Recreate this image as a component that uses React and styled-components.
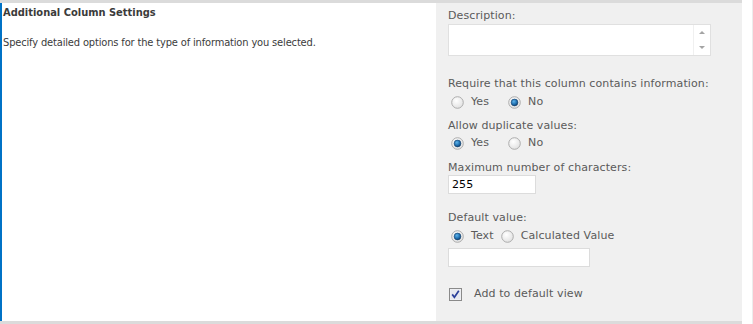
import React from "react";
import styled, { createGlobalStyle } from "styled-components";

const borderGray = "#dbdbdb";
const panelGray = "#f0f0f0";
const labelColor = "#5a5a5a";
const headColor = "#3b3b3b";
const blue = "#0072c6";

const Global = createGlobalStyle`
  body {
    margin: 0;
    background: #ffffff;
  }
`;

const Page = styled.div`
  width: 753px;
  height: 324px;
  display: flex;
  background: #ffffff;
  border-right: 1px solid #ececec;
  box-sizing: border-box;
`;

const Section = styled.div`
  width: 742px;
  height: 324px;
  box-sizing: border-box;
  display: flex;
  border-top: 3px solid ${borderGray};
  border-bottom: 3px solid ${borderGray};
`;

const InfoCell = styled.div`
  width: 436px;
  box-sizing: border-box;
  border-left: 2px solid ${blue};
  padding: 3px 0 0 1px;
  font-family: "DejaVu Sans Condensed", "Liberation Sans", sans-serif;
  font-size: 11px;
  color: ${headColor};
`;

const Heading = styled.div`
  font-weight: bold;
  line-height: 14px;
`;

const Description = styled.div`
  margin-top: 16px;
  line-height: 14px;
  letter-spacing: -0.15px;
`;

const FieldCell = styled.div`
  flex: 1;
  background: ${panelGray};
  padding: 4px 0 0 12px;
  font-family: "DejaVu Sans", Verdana, sans-serif;
  font-size: 11px;
  letter-spacing: 0.1px;
  color: ${labelColor};
  display: flex;
  flex-direction: column;
  align-items: flex-start;
`;

const Label = styled.div`
  line-height: 14px;
  padding-top: 2px;
  margin-top: ${(p) => p.$top || 0}px;
`;

const TextArea = styled.div`
  margin-top: 1px;
  width: 263px;
  height: 32px;
  box-sizing: border-box;
  background: #ffffff;
  border: 1px solid #e0e0e0;
  display: flex;
  justify-content: flex-end;
`;

const ScrollBar = styled.div`
  width: 17px;
  border-left: 1px solid #f0f0f0;
  display: flex;
  flex-direction: column;
  justify-content: space-between;
  align-items: center;
  padding: 6px 0 6px;
  box-sizing: border-box;
`;

const Arrow = styled.div`
  width: 0;
  height: 0;
  border-left: 3.5px solid transparent;
  border-right: 3.5px solid transparent;
  ${(p) =>
    p.$down
      ? "border-top: 3px solid #a4a4a4;"
      : "border-bottom: 3px solid #a4a4a4;"}
`;

const OptionRow = styled.div`
  display: flex;
  align-items: center;
  height: 16px;
  margin-top: ${(p) => p.$top || 0}px;
  padding-left: 3px;
`;

const Option = styled.label`
  display: flex;
  align-items: center;
  gap: 7px;
  margin-right: ${(p) => p.$gap || 0}px;
  line-height: 14px;
`;

const Input = styled.div`
  margin-top: ${(p) => p.$top || 0}px;
  width: ${(p) => p.$width}px;
  height: 19px;
  box-sizing: border-box;
  background: #ffffff;
  border: 1px solid #dcdcdc;
  padding: 2px 0 0 3px;
  color: #000000;
  line-height: 14px;
`;

const CheckRow = styled.label`
  display: flex;
  align-items: center;
  gap: 12px;
  margin-top: 20px;
  padding-left: 1px;
  line-height: 14px;
`;

const Radio = ({ checked }) => (
  <svg width="13" height="13" viewBox="0 0 13 13">
    <defs>
      <radialGradient id="rfill" cx="0.4" cy="0.35" r="0.7">
        <stop offset="0" stopColor="#ffffff" />
        <stop offset="1" stopColor="#e0e0e0" />
      </radialGradient>
      <radialGradient id="rdot" cx="0.4" cy="0.35" r="0.7">
        <stop offset="0" stopColor="#5fb4ea" />
        <stop offset="0.6" stopColor="#1f6fb0" />
        <stop offset="1" stopColor="#0c3a66" />
      </radialGradient>
    </defs>
    <circle cx="6.5" cy="6.5" r="5.8" fill="url(#rfill)" stroke="#adadad" strokeWidth="1" />
    {checked && <circle cx="6.5" cy="6.5" r="3.4" fill="url(#rdot)" stroke="#18426d" strokeWidth="0.6" />}
  </svg>
);

const Checkbox = () => (
  <svg width="13" height="13" viewBox="0 0 13 13">
    <rect x="0.5" y="0.5" width="12" height="12" fill="#f4f4f4" stroke="#8a8a8a" />
    <rect x="1.5" y="1.5" width="10" height="10" fill="#e6e8ef" />
    <path d="M3.2 6.4 L5.4 9.2 L9.8 2.8" fill="none" stroke="#2a3f9a" strokeWidth="1.7" />
  </svg>
);

export default function App() {
  return (
    <Page>
      <Global />
      <Section>
        <InfoCell>
          <Heading>Additional Column Settings</Heading>
          <Description>Specify detailed options for the type of information you selected.</Description>
        </InfoCell>
        <FieldCell>
          <Label>Description:</Label>
          <TextArea>
            <ScrollBar>
              <Arrow />
              <Arrow $down />
            </ScrollBar>
          </TextArea>
          <Label $top={19}>Require that this column contains information:</Label>
          <OptionRow $top={3}>
            <Option $gap={19}>
              <Radio /> Yes
            </Option>
            <Option>
              <Radio checked /> No
            </Option>
          </OptionRow>
          <Label $top={7}>Allow duplicate values:</Label>
          <OptionRow $top={2}>
            <Option $gap={19}>
              <Radio checked /> Yes
            </Option>
            <Option>
              <Radio /> No
            </Option>
          </OptionRow>
          <Label $top={8}>Maximum number of characters:</Label>
          <Input $top={0} $width={88}>255</Input>
          <Label $top={15}>Default value:</Label>
          <OptionRow $top={3}>
            <Option $gap={7}>
              <Radio checked /> Text
            </Option>
            <Option>
              <Radio /> Calculated Value
            </Option>
          </OptionRow>
          <Input $top={4} $width={142} />
          <CheckRow>
            <Checkbox />
            Add to default view
          </CheckRow>
        </FieldCell>
      </Section>
    </Page>
  );
}
